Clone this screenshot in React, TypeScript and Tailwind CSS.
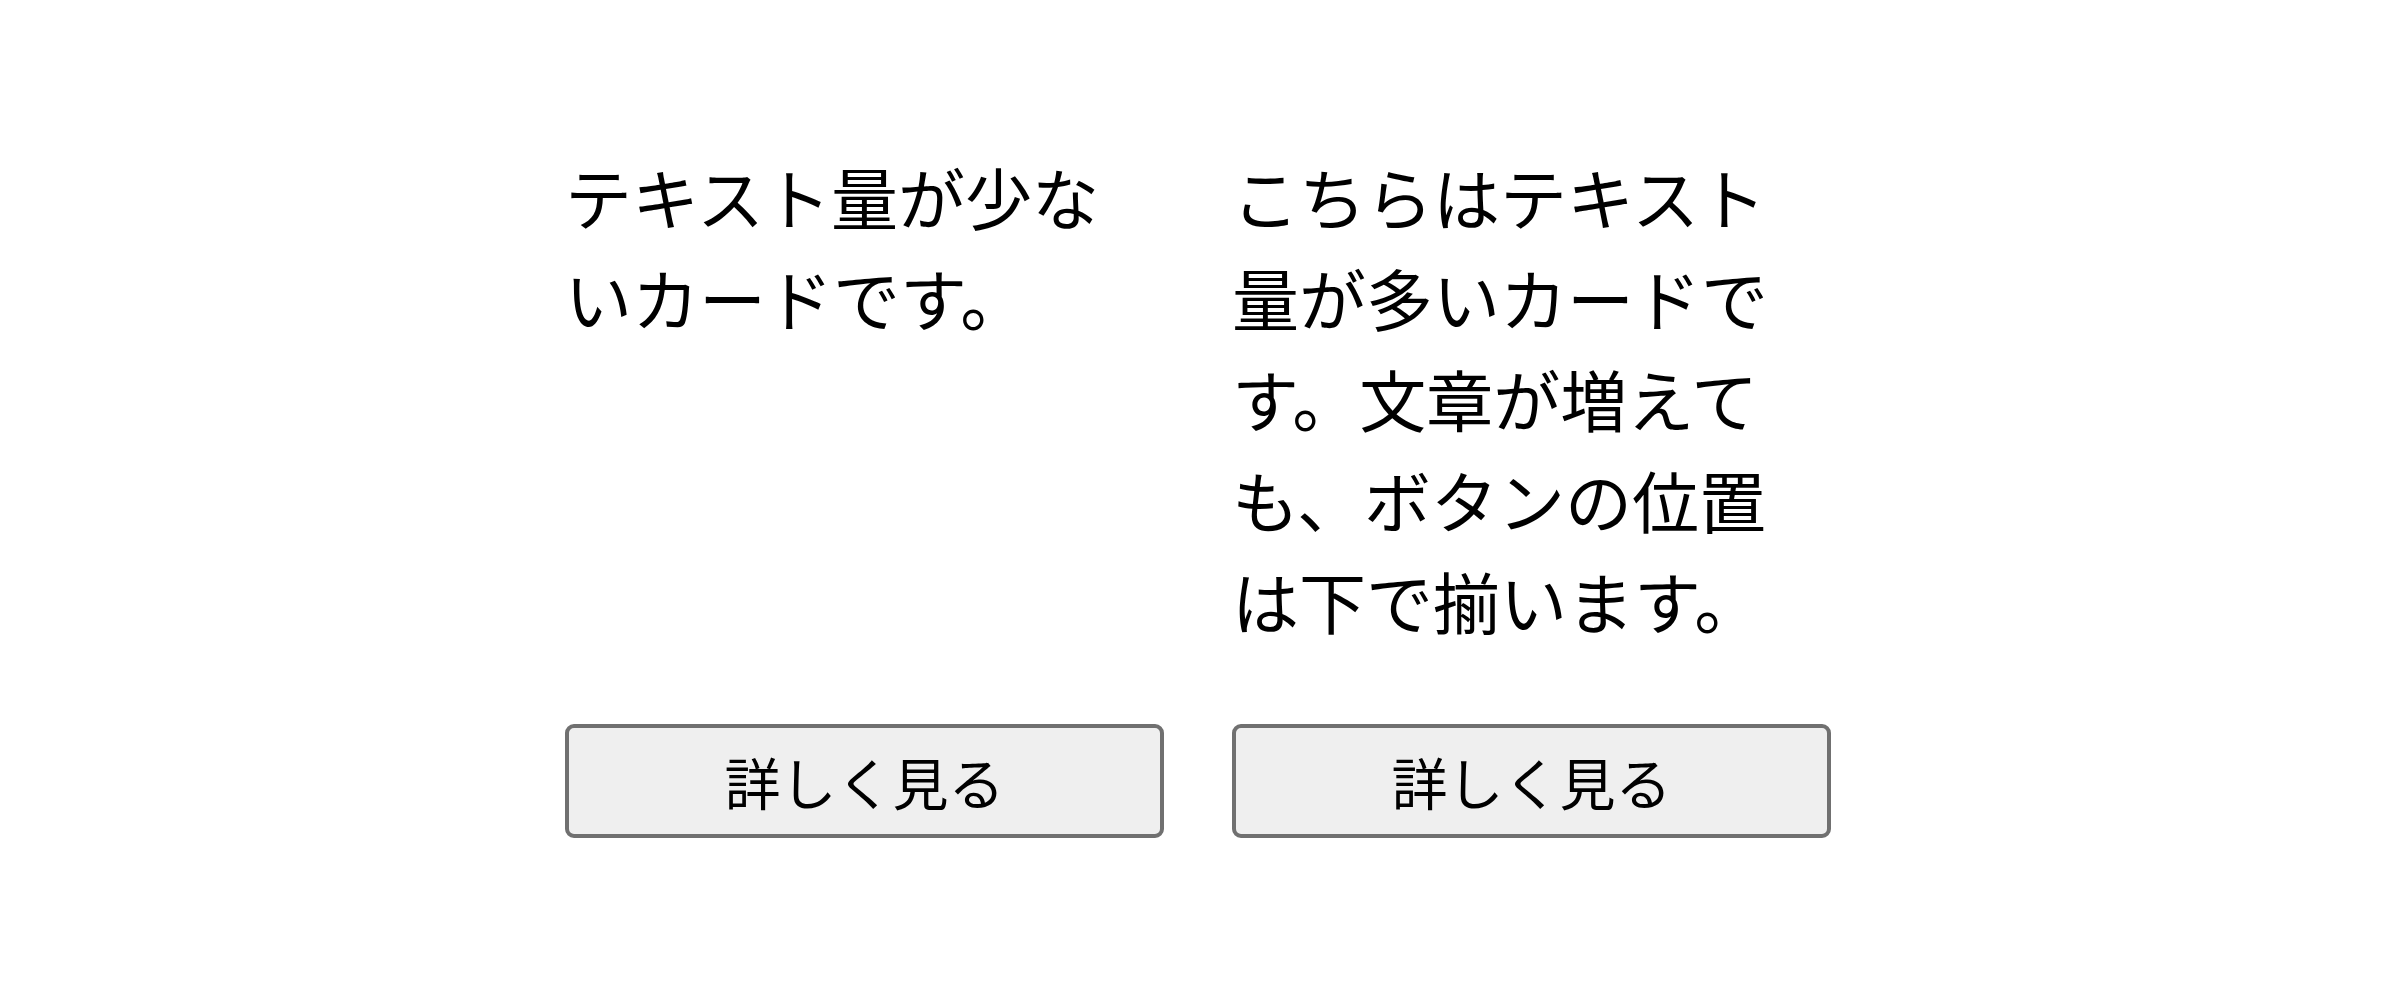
import React from "react";

const cards = [
  { body: "テキスト量が少ないカードです。" },
  { body: "こちらはテキスト量が多いカードです。文章が増えても、ボタンの位置は下で揃います。" },
];

function Card({ body }: { body: string }) {
  return (
    <div className="flex flex-col">
      <p className="mb-[74px] pr-[24px] text-[67px] leading-[101px] text-black">{body}</p>
      <button
        type="button"
        className="mt-auto h-[114px] w-full rounded-[9px] border-4 border-[#707070] bg-[#efefef] text-[56px] leading-none text-black"
      >
        詳しく見る
      </button>
    </div>
  );
}

export default function App() {
  return (
    <div
      className="flex h-[988px] w-full items-center justify-center bg-white pr-[4px] pb-[6px]"
      style={{ fontFamily: '"Noto Sans CJK JP", "Noto Sans", sans-serif' }}
    >
      <div className="grid grid-cols-[599px_599px] gap-x-[68px]">
        {cards.map((c, i) => (
          <Card key={i} body={c.body} />
        ))}
      </div>
    </div>
  );
}
